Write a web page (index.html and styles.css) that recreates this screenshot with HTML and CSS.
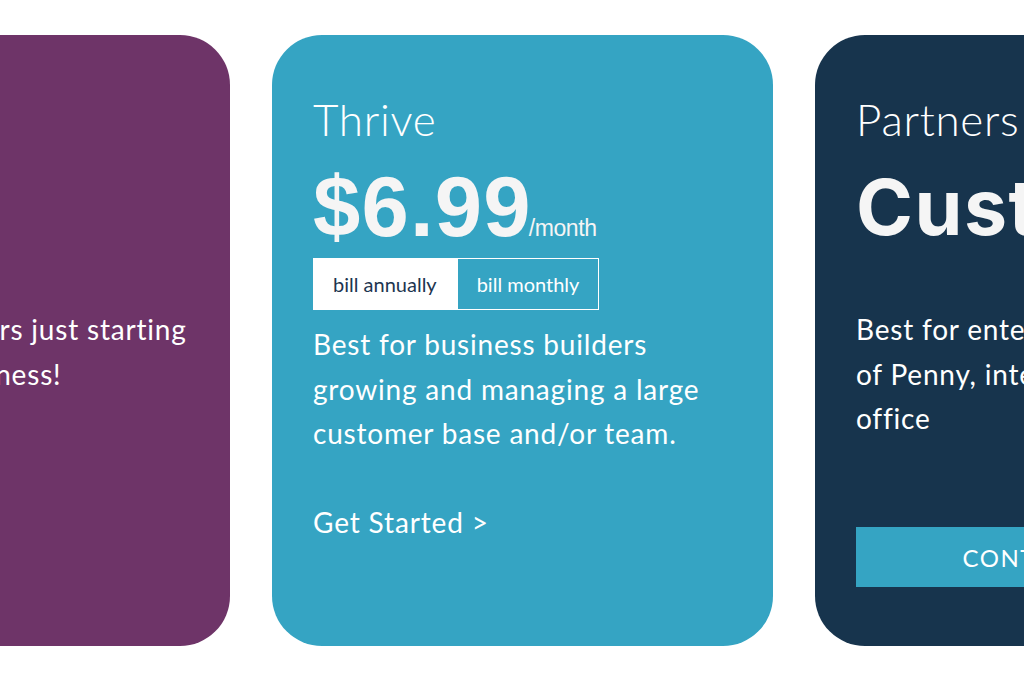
FILE: index.html
```html
<!DOCTYPE html>
<html lang="en">
<head>
<meta charset="utf-8">
<title>Pricing</title>
<link rel="stylesheet" href="styles.css">
</head>
<body>
<div class="track">
  <section class="card card-start">
    <h2 class="plan">Start</h2>
    <div class="price price-custom">Free</div>
    <p class="desc desc-plain">Perfect for creators just starting<br>on their new business!</p>
    <a class="link link-plain" href="#">Get Started &gt;</a>
  </section>

  <section class="card card-thrive">
    <h2 class="plan">Thrive</h2>
    <div class="price"><span class="amount">$6.99</span><span class="per">/month</span></div>
    <div class="toggle">
      <button class="opt opt-on" type="button">bill annually</button>
      <button class="opt" type="button">bill monthly</button>
    </div>
    <p class="desc">Best for business builders growing and managing a large customer base and/or team.</p>
    <a class="link" href="#">Get Started &gt;</a>
  </section>

  <section class="card card-partners">
    <h2 class="plan">Partners</h2>
    <div class="price price-custom">Custom</div>
    <p class="desc desc-plain">Best for enterprise level users<br>of Penny, integrated with back<br>office</p>
    <a class="cta" href="#">CONTACT SALES</a>
  </section>
</div>
</body>
</html>
```

FILE: styles.css
```css
* { box-sizing: border-box; }

html, body {
  margin: 0;
  padding: 0;
  background: #ffffff;
  overflow: hidden;
}

body {
  width: 1024px;
  height: 684px;
  font-family: "Lato", "Liberation Sans", sans-serif;
  color: #ffffff;
}

.track {
  display: flex;
  gap: 42px;
  padding-top: 35px;
  margin-left: -271px;
}

.card {
  flex: 0 0 501px;
  min-width: 0;
  height: 611px;
  border-radius: 50px;
  padding: 58px 42px 0 41px;
  display: flex;
  flex-direction: column;
  align-items: flex-start;
}

.card-start { background: #6e3468; }
.card-thrive { background: #35a4c3; }
.card-partners { background: #17344d; }

.plan {
  margin: 0;
  font-family: "Lato", sans-serif;
  font-weight: 300;
  font-size: 44px;
  line-height: 1.2;
  letter-spacing: 0.7px;
  color: #ffffff;
}

.price {
  margin-top: 20px;
  display: flex;
  align-items: baseline;
  height: 82px;
  line-height: 82px;
  white-space: nowrap;
  color: #f5f5f5;
}

.amount {
  font-family: "Liberation Sans", Arial, sans-serif;
  font-weight: 700;
  font-size: 85px;
  letter-spacing: 1.2px;
}

.per {
  font-family: "Liberation Sans", Arial, sans-serif;
  font-size: 23px;
  letter-spacing: -0.4px;
  margin-left: -3px;
}

.price-custom {
  font-family: "Inter", "Liberation Sans", sans-serif;
  font-weight: 700;
  font-size: 77px;
  letter-spacing: 1.5px;
}

.toggle {
  margin-top: 10px;
  display: flex;
  height: 52px;
}

.opt {
  font-family: "Lato", sans-serif;
  font-size: 20px;
  font-weight: 400;
  padding: 0 19px;
  border: 1px solid #ffffff;
  background: transparent;
  color: #ffffff;
  cursor: pointer;
}

.opt-on {
  background: #ffffff;
  color: #1d3550;
}

.desc {
  margin: 12px 0 0;
  font-size: 28px;
  line-height: 1.6;
  font-weight: 400;
  letter-spacing: 0.8px;
  color: #ffffff;
}

.desc-plain {
  margin-top: 59px;
  white-space: nowrap;
}

.link {
  margin-top: 44px;
  font-size: 28px;
  line-height: 1.6;
  letter-spacing: 0.85px;
  color: #ffffff;
  text-decoration: none;
}

.link-plain { margin-top: 40px; }

.cta {
  margin-top: 86px;
  align-self: stretch;
  height: 60px;
  background: #35a4c3;
  color: #ffffff;
  font-size: 24px;
  letter-spacing: 1.5px;
  text-decoration: none;
  display: flex;
  align-items: center;
  justify-content: center;
}
```
